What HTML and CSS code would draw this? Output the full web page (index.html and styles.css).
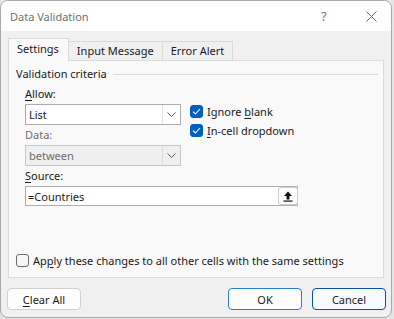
FILE: index.html
```html
<!DOCTYPE html>
<html lang="en">
<head>
  <meta charset="UTF-8" />
  <title>Data Validation</title>
  <link rel="stylesheet" href="styles.css">
</head>
<body>

  <div class="window">
    <div class="titlebar">
      <span class="title">Data Validation</span>
      <span class="help">?</span>
      <span class="close">
        <svg width="11" height="11" viewBox="0 0 11 11"><path d="M0.5 0.5L10.5 10.5M10.5 0.5L0.5 10.5" stroke="#6a6a6a" stroke-width="1" fill="none"/></svg>
      </span>
    </div>

    <div class="tabs">
      <div class="tab active">Settings</div>
      <div class="tab">Input Message</div>
      <div class="tab">Error Alert</div>
    </div>

    <div class="panel">
      <div class="group-title"><span>Validation criteria</span></div>

      <div class="criteria">
        <div class="fields">
          <div class="label"><u>A</u>llow:</div>
          <div class="combo">
            <span class="value">List</span>
            <span class="drop">
              <svg width="9" height="5" viewBox="0 0 9 5"><path d="M0.5 0.5L4.5 4.5L8.5 0.5" stroke="#555" fill="none"/></svg>
            </span>
          </div>
          <div class="label disabled">Data:</div>
          <div class="combo disabled">
            <span class="value">between</span>
            <span class="drop">
              <svg width="9" height="5" viewBox="0 0 9 5"><path d="M0.5 0.5L4.5 4.5L8.5 0.5" stroke="#555" fill="none"/></svg>
            </span>
          </div>
        </div>

        <div class="options">
          <div class="check">
            <span class="box checked">
              <svg width="9" height="7" viewBox="0 0 9 7"><path d="M1 3.6L3.4 6L8 1" stroke="#fff" stroke-width="1.1" fill="none"/></svg>
            </span>
            <span>Ignore <u>b</u>lank</span>
          </div>
          <div class="check">
            <span class="box checked">
              <svg width="9" height="7" viewBox="0 0 9 7"><path d="M1 3.6L3.4 6L8 1" stroke="#fff" stroke-width="1.1" fill="none"/></svg>
            </span>
            <span><u>I</u>n-cell dropdown</span>
          </div>
        </div>
      </div>

      <div class="source-block">
        <div class="label"><u>S</u>ource:</div>
        <div class="source">
          <span class="value">=Countries</span>
          <span class="collapse">
            <svg width="10" height="11" viewBox="0 0 10 11"><path d="M5 0.5L9 5H6.5V8.5H3.5V5H1Z" fill="#111"/><rect x="0.5" y="9.5" width="9" height="1.2" fill="#111"/></svg>
          </span>
        </div>
      </div>

      <div class="check apply">
        <span class="box"></span>
        <span>Ap<u>p</u>ly these changes to all other cells with the same settings</span>
      </div>
    </div>

    <div class="buttons">
      <button class="btn"><u>C</u>lear All</button>
      <span class="spacer"></span>
      <button class="btn ok">OK</button>
      <button class="btn cancel">Cancel</button>
    </div>
  </div>

</body>
</html>
```

FILE: styles.css
```css
* { margin: 0; padding: 0; box-sizing: border-box; }
body {
  font-family: "Noto Sans", "Open Sans", sans-serif;
  font-size: 11px;
  color: #1a1a1a;
  background: #e4e4e4;
}
u { text-underline-offset: 2px; }

.window {
  width: 392px;
  height: 318px;
  background: #f0f0f0;
  border: 1px solid #a9a9a9;
  border-radius: 8px;
  overflow: hidden;
  display: flex;
  flex-direction: column;
}

/* title bar */
.titlebar {
  height: 30px;
  background: #fff;
  display: flex;
  align-items: center;
  padding-left: 9px;
  flex: none;
}
.title { color: #6f6f6f; flex: 1; }
.help { color: #7a7a7a; font-size: 13px; width: 8px; }
.close { display: flex; margin: 0 14px 0 37px; }

/* tabs */
.tabs {
  display: flex;
  align-items: flex-end;
  margin: 7px 0 -1px 7px;
  height: 23px;
  position: relative;
  z-index: 1;
  flex: none;
}
.tab {
  height: 20px;
  line-height: 18px;
  padding: 0 8px;
  border: 1px solid #dadada;
  border-left: none;
  background: #f0f0f0;
  color: #1a1a1a;
}
.tab.active {
  height: 23px;
  line-height: 20px;
  padding: 0 9px 0 8px;
  border-left: 1px solid #dadada;
  border-bottom: none;
  background: #f9f9f9;
}

/* panel */
.panel {
  margin: 0 7px;
  height: 218px;
  background: #f9f9f9;
  border: 1px solid #dcdcdc;
  padding: 5px 5px 0 7px;
  flex: none;
}
.group-title {
  display: flex;
  align-items: center;
  height: 16px;
  line-height: 16px;
}
.group-title::after {
  content: "";
  flex: 1;
  height: 1px;
  background: #d9d9d9;
  margin-left: 6px;
}

.criteria {
  display: flex;
  gap: 9px;
  margin: 2px 0 0 9px;
}
.fields { width: 156px; }
.label {
  line-height: 16px;
  padding-top: 2px;
  margin-bottom: 2px;
}
.label.disabled { color: #6d6d6d; }

.combo {
  height: 21px;
  display: flex;
  align-items: stretch;
  background: #fff;
  border: 1px solid #adadad;
}
.combo .value {
  flex: 1;
  line-height: 19px;
  padding-left: 3px;
}
.combo .drop {
  width: 18px;
  border-left: 1px solid #e3e3e3;
  display: flex;
  align-items: center;
  justify-content: center;
}
.combo.disabled {
  background: #efefef;
  border-color: #c8c8c8;
  color: #6d6d6d;
}
.combo.disabled .drop { border-left-color: #dcdcdc; }

.options { padding-top: 18px; }
.check {
  height: 19px;
  display: flex;
  align-items: center;
  gap: 4px;
}
.box {
  width: 13px;
  height: 13px;
  border-radius: 3px;
  border: 1px solid #6b6b6b;
  background: #f6f6f6;
  display: flex;
  align-items: center;
  justify-content: center;
}
.box.checked {
  background: #0060c0;
  border-color: #0060c0;
}

.source-block { margin-left: 9px; }
.source {
  width: 273px;
  height: 20px;
  display: flex;
  align-items: center;
  background: #fff;
  border: 1px solid #adadad;
}
.source .value { flex: 1; padding-left: 2px; }
.collapse {
  width: 20px;
  height: 18px;
  border: 1px solid #cfcfcf;
  border-radius: 3px;
  background: #fdfdfd;
  display: flex;
  align-items: center;
  justify-content: center;
  margin-right: -1px;
}

.apply { margin-top: 45px; }

/* bottom buttons */
.buttons {
  display: flex;
  gap: 10px;
  padding: 10px 5px 0 6px;
}
.spacer { flex: 1; }
.btn {
  width: 74px;
  height: 22px;
  font: inherit;
  color: #1a1a1a;
  background: #fdfdfd;
  border: 1px solid #d0d0d0;
  border-radius: 4px;
}
.btn.ok { border-color: #2a7fd4; }
.btn.cancel { border-color: #0a4fa0; background: #f6f9fd; }
```
